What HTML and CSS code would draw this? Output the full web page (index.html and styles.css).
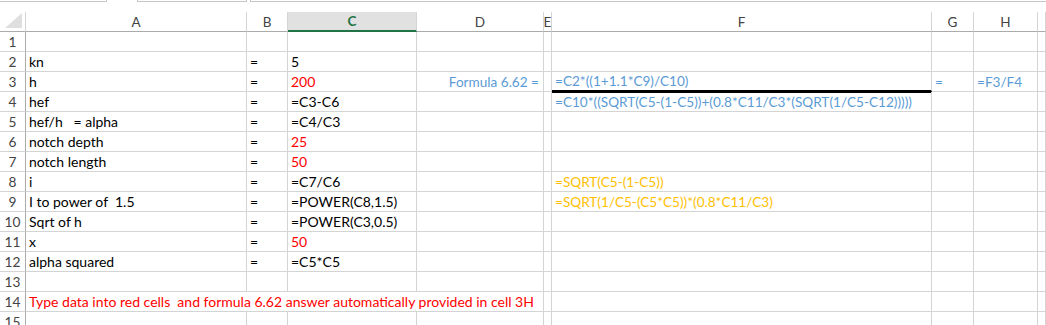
FILE: index.html
```html
<!DOCTYPE html>
<html lang="en">
<head>
  <meta charset="UTF-8">
  <title>Formula 6.62</title>
  <link rel="stylesheet" href="styles.css">
</head>
<body>
  <div class="ribbon">
    <div class="box name-box"></div>
    <div class="box fx-box"></div>
    <div class="box formula-box"></div>
  </div>

  <div class="sheet">
    <!-- column headers -->
    <div class="corner"><svg width="26" height="19" viewBox="0 0 26 19"><polygon points="5,16 22,16 22,1" fill="#dfdfdf"/></svg></div>
    <div class="col-head">A</div>
    <div class="col-head">B</div>
    <div class="col-head selected">C</div>
    <div class="col-head">D</div>
    <div class="col-head">E</div>
    <div class="col-head">F</div>
    <div class="col-head">G</div>
    <div class="col-head">H</div>
    <div class="col-head"></div>

    <!-- row 1 -->
    <div class="row-head">1</div>
    <div class="cell"></div><div class="cell"></div><div class="cell"></div><div class="cell"></div>
    <div class="cell"></div><div class="cell"></div><div class="cell"></div><div class="cell"></div><div class="cell"></div>

    <!-- row 2 -->
    <div class="row-head">2</div>
    <div class="cell">kn</div>
    <div class="cell">=</div>
    <div class="cell">5</div>
    <div class="cell"></div><div class="cell"></div><div class="cell"></div><div class="cell"></div><div class="cell"></div><div class="cell"></div>

    <!-- row 3 -->
    <div class="row-head">3</div>
    <div class="cell">h</div>
    <div class="cell">=</div>
    <div class="cell input">200</div>
    <div class="cell blue right">Formula 6.62 =</div>
    <div class="cell"></div>
    <div class="cell blue numerator">=C2*((1+1.1*C9)/C10)</div>
    <div class="cell blue">=</div>
    <div class="cell blue">=F3/F4</div>
    <div class="cell"></div>

    <!-- row 4 -->
    <div class="row-head">4</div>
    <div class="cell">hef</div>
    <div class="cell">=</div>
    <div class="cell">=C3-C6</div>
    <div class="cell"></div>
    <div class="cell"></div>
    <div class="cell blue">=C10*((SQRT(C5-(1-C5))+(0.8*C11/C3*(SQRT(1/C5-C12)))))</div>
    <div class="cell"></div><div class="cell"></div><div class="cell"></div>

    <!-- row 5 -->
    <div class="row-head">5</div>
    <div class="cell">hef/h   = alpha</div>
    <div class="cell">=</div>
    <div class="cell">=C4/C3</div>
    <div class="cell"></div><div class="cell"></div><div class="cell"></div><div class="cell"></div><div class="cell"></div><div class="cell"></div>

    <!-- row 6 -->
    <div class="row-head">6</div>
    <div class="cell">notch depth</div>
    <div class="cell">=</div>
    <div class="cell input">25</div>
    <div class="cell"></div><div class="cell"></div><div class="cell"></div><div class="cell"></div><div class="cell"></div><div class="cell"></div>

    <!-- row 7 -->
    <div class="row-head">7</div>
    <div class="cell">notch length</div>
    <div class="cell">=</div>
    <div class="cell input">50</div>
    <div class="cell"></div><div class="cell"></div><div class="cell"></div><div class="cell"></div><div class="cell"></div><div class="cell"></div>

    <!-- row 8 -->
    <div class="row-head">8</div>
    <div class="cell">i</div>
    <div class="cell">=</div>
    <div class="cell">=C7/C6</div>
    <div class="cell"></div>
    <div class="cell"></div>
    <div class="cell orange">=SQRT(C5-(1-C5))</div>
    <div class="cell"></div><div class="cell"></div><div class="cell"></div>

    <!-- row 9 -->
    <div class="row-head">9</div>
    <div class="cell">I to power of  1.5</div>
    <div class="cell">=</div>
    <div class="cell">=POWER(C8,1.5)</div>
    <div class="cell"></div>
    <div class="cell"></div>
    <div class="cell orange">=SQRT(1/C5-(C5*C5))*(0.8*C11/C3)</div>
    <div class="cell"></div><div class="cell"></div><div class="cell"></div>

    <!-- row 10 -->
    <div class="row-head">10</div>
    <div class="cell">Sqrt of h</div>
    <div class="cell">=</div>
    <div class="cell">=POWER(C3,0.5)</div>
    <div class="cell"></div><div class="cell"></div><div class="cell"></div><div class="cell"></div><div class="cell"></div><div class="cell"></div>

    <!-- row 11 -->
    <div class="row-head">11</div>
    <div class="cell">x</div>
    <div class="cell">=</div>
    <div class="cell input">50</div>
    <div class="cell"></div><div class="cell"></div><div class="cell"></div><div class="cell"></div><div class="cell"></div><div class="cell"></div>

    <!-- row 12 -->
    <div class="row-head">12</div>
    <div class="cell">alpha squared</div>
    <div class="cell">=</div>
    <div class="cell">=C5*C5</div>
    <div class="cell"></div><div class="cell"></div><div class="cell"></div><div class="cell"></div><div class="cell"></div><div class="cell"></div>

    <!-- row 13 -->
    <div class="row-head">13</div>
    <div class="cell"></div><div class="cell"></div><div class="cell"></div><div class="cell"></div>
    <div class="cell"></div><div class="cell"></div><div class="cell"></div><div class="cell"></div><div class="cell"></div>

    <!-- row 14 -->
    <div class="row-head">14</div>
    <div class="cell input span-4">Type data into red cells  and formula 6.62 answer automatically provided in cell 3H</div>
    <div class="cell"></div><div class="cell"></div><div class="cell"></div><div class="cell"></div><div class="cell"></div>

    <!-- row 15 -->
    <div class="row-head">15</div>
    <div class="cell"></div><div class="cell"></div><div class="cell"></div><div class="cell"></div>
    <div class="cell"></div><div class="cell"></div><div class="cell"></div><div class="cell"></div><div class="cell"></div>
  </div>
</body>
</html>
```

FILE: styles.css
```css
/* Global Styles */
html,
body {
  margin: 0;
  padding: 0;
  overflow: hidden;
  background-color: #ffffff;
  font-family: Lato, "Open Sans", sans-serif;
}

/* Formula bar remnants */
.ribbon {
  display: flex;
  height: 12px;
}

.box {
  height: 1px;
  border: 1px solid #c6c6c6;
  border-top: none;
}

.name-box {
  width: 106px;
  border-left: none;
}

.fx-box {
  width: 108px;
  margin-left: 30px;
}

.formula-box {
  flex: 1;
  margin-left: 3px;
  border-right: none;
}

/* Sheet grid */
.sheet {
  display: grid;
  grid-template-columns: 26px 221px 41px 129px 127px 8px 380px 42px 64px 1fr;
  grid-auto-rows: 20px;
  font-size: 14px;
}

.sheet > div {
  box-sizing: border-box;
  border-right: 1px solid #d4d4d4;
  border-bottom: 1px solid #d4d4d4;
  overflow: visible;
}

.corner,
.col-head {
  border-bottom-color: #ababab !important;
}

.corner svg {
  display: block;
}

.col-head {
  display: flex;
  align-items: center;
  justify-content: center;
  color: #444;
  font-size: 13.5px;
}

.col-head.selected {
  background-color: #e1e1e1;
  border-bottom: 2px solid #217346 !important;
  color: #217346;
  font-weight: bold;
}

.row-head {
  display: flex;
  align-items: flex-end;
  justify-content: center;
  padding-bottom: 1px;
  font-size: 13.7px;
  color: #444;
  border-right-color: #ababab !important;
}

.cell {
  display: flex;
  align-items: flex-end;
  padding: 0 2px 1px 3px;
  color: #000;
  white-space: pre;
}

.cell.right {
  justify-content: flex-end;
  padding-right: 4px;
}

.cell.input {
  color: #ff0000;
}

.cell.blue {
  color: #5b9bd5;
  font-size: 13.6px;
}

.cell.orange {
  color: #ffc000;
  font-size: 13.6px;
}

.cell.numerator {
  border-bottom: 2px solid #000;
  box-shadow: 0 1px 0 #000;
}

.span-4 {
  grid-column: span 4;
}
```
